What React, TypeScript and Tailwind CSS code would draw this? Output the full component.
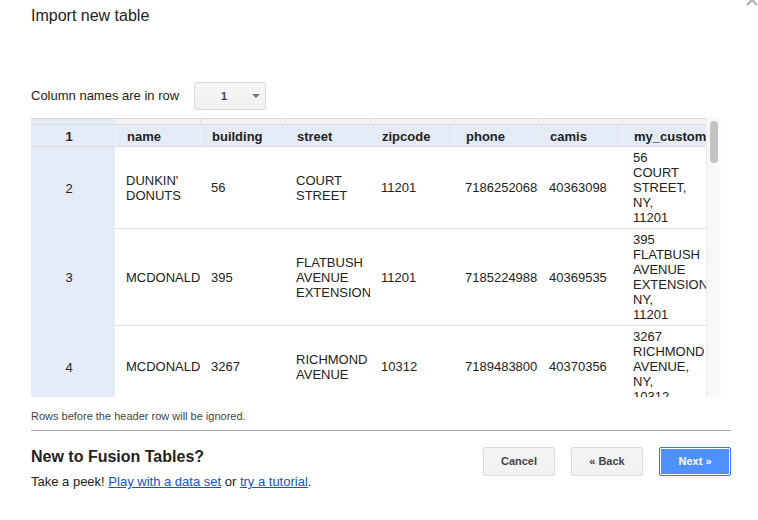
const rows = [
  {
    n: "2",
    cells: ["DUNKIN' DONUTS", "56", "COURT STREET", "11201", "7186252068", "40363098", "56 COURT STREET, NY, 11201"],
  },
  {
    n: "3",
    cells: ["MCDONALD'S", "395", "FLATBUSH AVENUE EXTENSION", "11201", "7185224988", "40369535", "395 FLATBUSH AVENUE EXTENSION, NY, 11201"],
  },
  {
    n: "4",
    cells: ["MCDONALD'S", "3267", "RICHMOND AVENUE", "10312", "7189483800", "40370356", "3267 RICHMOND AVENUE, NY, 10312"],
  },
];

const headers = ["name", "building", "street", "zipcode", "phone", "camis", "my_custom_address"];
const widths = ["w-[85px]", "w-[85px]", "w-[85px]", "w-[84px]", "w-[84px]", "w-[84px]", "w-[84px]"];

function Button({ label, primary }: { label: string; primary?: boolean }) {
  return primary ? (
    <button className="w-[72px] h-[29px] rounded-[2px] border border-[#3079ed] bg-[#4d90fe] shadow-[inset_0_0_0_1px_#fff] text-[11px] font-bold text-white">
      {label}
    </button>
  ) : (
    <button className="w-[72px] h-[29px] rounded-[2px] border border-[#dcdcdc] bg-gradient-to-b from-[#f5f5f5] to-[#f1f1f1] text-[11px] font-bold text-[#444]">
      {label}
    </button>
  );
}

export default function App() {
  return (
    <div className="relative w-[758px] h-[520px] overflow-hidden bg-white pl-[31px] pr-[27px] font-['Liberation_Sans',Arial,sans-serif] text-[#222]">
      {/* close button, mostly cut off */}
      <svg className="absolute left-[745px] top-[-7px]" width="14" height="14" viewBox="0 0 14 14">
        <path d="M2 2 L12 12 M12 2 L2 12" stroke="#aaa" strokeWidth="2" />
      </svg>

      <h1 className="pt-[6px] text-[16px] leading-[20px] font-normal">Import new table</h1>

      <div className="mt-[56px] flex items-center h-[28px]">
        <span className="w-[163px] text-[13px]">Column names are in row</span>
        <div className="flex items-center w-[72px] h-[28px] rounded-[2px] border border-[#dcdcdc] bg-gradient-to-b from-[#f5f5f5] to-[#f1f1f1]">
          <span className="ml-[26px] text-[11px] font-bold text-[#444]">1</span>
          <svg className="ml-[25px]" width="8" height="4" viewBox="0 0 8 4">
            <path d="M0 0 H8 L4 4 Z" fill="#777" />
          </svg>
        </div>
      </div>

      {/* preview grid */}
      <div className="mt-[8px] flex h-[279px] w-[690px]">
        <div className="w-[675px] overflow-hidden border-t border-[#d9d9d9] text-[13px] leading-[15px]">
          <div className="flex h-[6px] border-b border-[#dcdcdc]">
            <div className="w-[84px] shrink-0 bg-[#e4ebf6]" />
            {widths.map((w, i) => (
              <div key={i} className={`${w} shrink-0 bg-[#f3f3f3] border-l border-[#e3e3e3]`} />
            ))}
          </div>
          <div className="flex bg-[#e4ebf6] border-b border-[#dcdcdc] font-bold">
            <div className="w-[84px] shrink-0 pt-[4px] pb-[2px] pr-[8px] text-center">1</div>
            {headers.map((h, i) => (
              <div key={h} className={`${widths[i]} shrink-0 overflow-hidden whitespace-nowrap pt-[4px] pb-[2px] pl-[11px] border-l border-[#edf1f9]`}>
                {h}
              </div>
            ))}
          </div>
          {rows.map((r) => (
            <div key={r.n} className="flex">
              <div className="w-[84px] shrink-0 flex items-center justify-center pr-[8px] bg-[#e4ebf6]">{r.n}</div>
              {r.cells.map((c, i) => (
                <div key={i} className={`${widths[i]} shrink-0 overflow-hidden flex items-center py-[3px] pl-[11px] border-b border-[#dedede]`}>
                  <div className="w-[58px] shrink-0">{c}</div>
                </div>
              ))}
            </div>
          ))}
        </div>
        <div className="w-[15px] border-l border-[#ececec] bg-gradient-to-r from-[#f6f6f6] to-[#fbfbfb]">
          <div className="mt-[3px] ml-[3px] w-[8px] h-[42px] rounded-full bg-[#c3c3c3]" />
        </div>
      </div>

      <p className="mt-[13px] text-[11px] leading-[13px] text-[#444]">Rows before the header row will be ignored.</p>
      <div className="mt-[7px] border-t border-[#aaa]" />

      <div className="flex justify-between">
        <div className="mt-[16px]">
          <h2 className="text-[16px] leading-[19px] font-bold">New to Fusion Tables?</h2>
          <p className="mt-[8px] text-[13px] leading-[15px]">
            Take a peek!{" "}
            <a href="#" className="text-[#15c] underline">Play with a data set</a> or{" "}
            <a href="#" className="text-[#15c] underline">try a tutorial</a>.
          </p>
        </div>
        <div className="mt-[16px] flex gap-[16px] items-start">
          <Button label="Cancel" />
          <Button label="« Back" />
          <Button label="Next »" primary />
        </div>
      </div>
    </div>
  );
}
